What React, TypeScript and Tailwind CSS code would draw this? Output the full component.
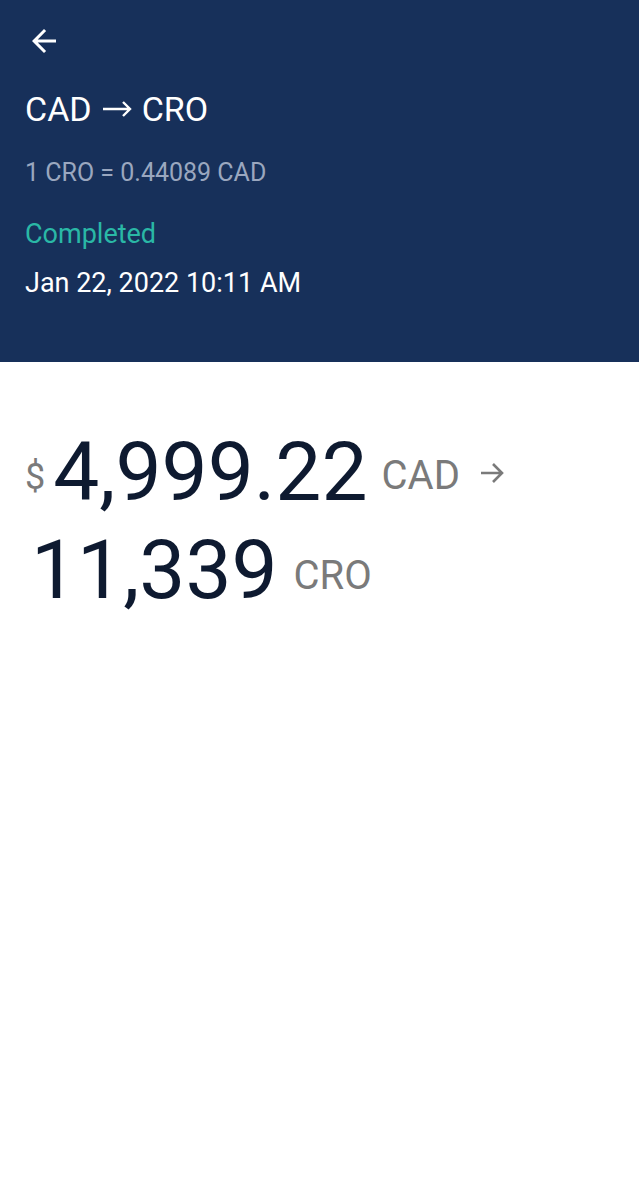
function BackArrow() {
  return (
    <svg viewBox="0 0 24 24" className="h-[36px] w-[36px] fill-white">
      <path d="M20 11H7.83l5.59-5.59L12 4l-8 8 8 8 1.41-1.41L7.83 13H20v-2z" />
    </svg>
  );
}

function TitleArrow() {
  return (
    <svg viewBox="0 0 30 16" className="mx-[10px] h-[16px] w-[30px]" fill="none" stroke="white" strokeWidth={2.4}>
      <path d="M1 8h27M21 1l7 7-7 7" />
    </svg>
  );
}

function SmallArrow() {
  return (
    <svg
      viewBox="0 0 26 22"
      className="ml-[19px] inline-block h-[22px] w-[26px] align-[16px]"
      fill="none"
      stroke="#7a7a7a"
      strokeWidth={2.6}
    >
      <path d="M2 11h21M14 2l9 9-9 9" />
    </svg>
  );
}

export default function App() {
  return (
    <div className="min-h-[1200px] bg-white font-['Roboto',sans-serif]">
      <div className="h-[362px] bg-[#17305a] px-[25px] pt-[23px]">
        <div className="ml-[1px]">
          <BackArrow />
        </div>
        <h1 className="mt-[30px] flex items-center text-[34px] leading-[40px] text-white">
          <span>CAD</span>
          <TitleArrow />
          <span>CRO</span>
        </h1>
        <p className="mt-[29px] text-[25px] leading-[30px] text-[#9aa7bf]">1 CRO = 0.44089 CAD</p>
        <p className="mt-[30px] text-[27px] leading-[32px] text-[#2ab8a6]">Completed</p>
        <p className="mt-[17px] text-[27px] leading-[32px] text-white">Jan 22, 2022 10:11 AM</p>
      </div>
      <div className="px-[25px] pt-[60px] text-[#0e1a30]">
        <div className="whitespace-nowrap text-[82px] leading-[100px]">
          <span className="align-[11px] text-[36px] leading-none text-[#7a7a7a]">$</span>
          <span className="ml-[8px]">4,999.22</span>
          <span className="ml-[14px] align-[11px] text-[40px] leading-none text-[#7a7a7a]">CAD</span>
          <SmallArrow />
        </div>
        <div className="whitespace-nowrap pl-[6px] text-[82px] leading-[96px]">
          <span>11,339</span>
          <span className="ml-[16px] align-[9px] text-[40px] leading-none text-[#7a7a7a]">CRO</span>
        </div>
      </div>
    </div>
  );
}
